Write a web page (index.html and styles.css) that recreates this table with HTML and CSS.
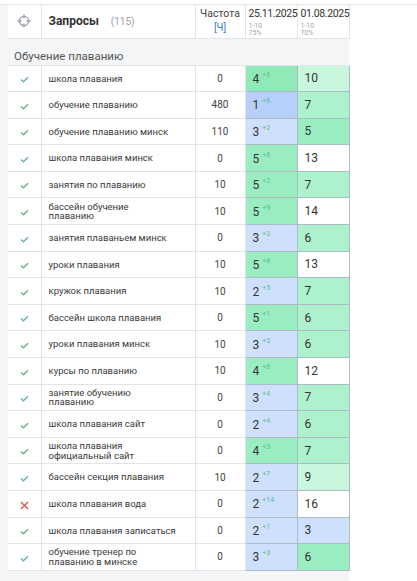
FILE: index.html
```html
<!DOCTYPE html>
<html lang="ru">
<head>
    <meta charset="UTF-8">
    <meta name="viewport" content="width=device-width, initial-scale=1.0">
    <title>Запросы</title>
    <link rel="stylesheet" href="styles.css">
</head>
<body>
    <div class="top-gap"></div>
    <div class="panel">
        <table class="queries">
            <colgroup>
                <col class="col-icon">
                <col class="col-query">
                <col class="col-freq">
                <col class="col-date">
                <col class="col-date">
            </colgroup>
            <thead>
                <tr class="head-row">
                    <th class="icon-cell">
                        <svg width="14" height="14" viewBox="0 0 14 14" class="target">
                            <circle cx="7" cy="7" r="4.6" fill="none" stroke="#9aa0a6" stroke-width="1.3"/>
                            <path d="M7 0.5V4.5M7 9.5V13.5M0.5 7H4.5M9.5 7H13.5" stroke="#9aa0a6" stroke-width="1.3"/>
                        </svg>
                    </th>
                    <th class="query-head">Запросы <span class="count">(115)</span></th>
                    <th class="freq-head">Частота<br><span class="freq-unit">[Ч]</span></th>
                    <th class="date-head">25.11.2025<span class="range">1-10</span><span class="range">75%</span></th>
                    <th class="date-head">01.08.2025<span class="range">1-10</span><span class="range">70%</span></th>
                </tr>
            </thead>
            <tbody>
                <tr class="group-row">
                    <td colspan="5">Обучение плаванию</td>
                </tr>
                <tr>
                    <td class="icon-cell"><svg class="ok" width="9" height="7" viewBox="0 0 9 7"><path d="M1 3.6L3.4 5.8L8 1.2" fill="none" stroke="#5fb882" stroke-width="1.3"/></svg></td>
                    <td class="query"><span>школа плавания</span></td>
                    <td class="freq">0</td>
                    <td class="pos g4">4<sup>+6</sup></td>
                    <td class="pos g1">10</td>
                </tr>
                <tr>
                    <td class="icon-cell"><svg class="ok" width="9" height="7" viewBox="0 0 9 7"><path d="M1 3.6L3.4 5.8L8 1.2" fill="none" stroke="#5fb882" stroke-width="1.3"/></svg></td>
                    <td class="query"><span>обучение плаванию</span></td>
                    <td class="freq">480</td>
                    <td class="pos b2">1<sup>+6</sup></td>
                    <td class="pos g2">7</td>
                </tr>
                <tr>
                    <td class="icon-cell"><svg class="ok" width="9" height="7" viewBox="0 0 9 7"><path d="M1 3.6L3.4 5.8L8 1.2" fill="none" stroke="#5fb882" stroke-width="1.3"/></svg></td>
                    <td class="query"><span>обучение плаванию минск</span></td>
                    <td class="freq">110</td>
                    <td class="pos b1">3<sup>+2</sup></td>
                    <td class="pos g3">5</td>
                </tr>
                <tr>
                    <td class="icon-cell"><svg class="ok" width="9" height="7" viewBox="0 0 9 7"><path d="M1 3.6L3.4 5.8L8 1.2" fill="none" stroke="#5fb882" stroke-width="1.3"/></svg></td>
                    <td class="query"><span>школа плавания минск</span></td>
                    <td class="freq">0</td>
                    <td class="pos g3">5<sup>+8</sup></td>
                    <td class="pos">13</td>
                </tr>
                <tr>
                    <td class="icon-cell"><svg class="ok" width="9" height="7" viewBox="0 0 9 7"><path d="M1 3.6L3.4 5.8L8 1.2" fill="none" stroke="#5fb882" stroke-width="1.3"/></svg></td>
                    <td class="query"><span>занятия по плаванию</span></td>
                    <td class="freq">10</td>
                    <td class="pos g3">5<sup>+2</sup></td>
                    <td class="pos g2">7</td>
                </tr>
                <tr>
                    <td class="icon-cell"><svg class="ok" width="9" height="7" viewBox="0 0 9 7"><path d="M1 3.6L3.4 5.8L8 1.2" fill="none" stroke="#5fb882" stroke-width="1.3"/></svg></td>
                    <td class="query"><span>бассейн обучение плаванию</span></td>
                    <td class="freq">10</td>
                    <td class="pos g3">5<sup>+9</sup></td>
                    <td class="pos">14</td>
                </tr>
                <tr>
                    <td class="icon-cell"><svg class="ok" width="9" height="7" viewBox="0 0 9 7"><path d="M1 3.6L3.4 5.8L8 1.2" fill="none" stroke="#5fb882" stroke-width="1.3"/></svg></td>
                    <td class="query"><span>занятия плаваньем минск</span></td>
                    <td class="freq">0</td>
                    <td class="pos b1">3<sup>+3</sup></td>
                    <td class="pos g2">6</td>
                </tr>
                <tr>
                    <td class="icon-cell"><svg class="ok" width="9" height="7" viewBox="0 0 9 7"><path d="M1 3.6L3.4 5.8L8 1.2" fill="none" stroke="#5fb882" stroke-width="1.3"/></svg></td>
                    <td class="query"><span>уроки плавания</span></td>
                    <td class="freq">10</td>
                    <td class="pos g3">5<sup>+8</sup></td>
                    <td class="pos">13</td>
                </tr>
                <tr>
                    <td class="icon-cell"><svg class="ok" width="9" height="7" viewBox="0 0 9 7"><path d="M1 3.6L3.4 5.8L8 1.2" fill="none" stroke="#5fb882" stroke-width="1.3"/></svg></td>
                    <td class="query"><span>кружок плавания</span></td>
                    <td class="freq">10</td>
                    <td class="pos b1">2<sup>+5</sup></td>
                    <td class="pos g2">7</td>
                </tr>
                <tr>
                    <td class="icon-cell"><svg class="ok" width="9" height="7" viewBox="0 0 9 7"><path d="M1 3.6L3.4 5.8L8 1.2" fill="none" stroke="#5fb882" stroke-width="1.3"/></svg></td>
                    <td class="query"><span>бассейн школа плавания</span></td>
                    <td class="freq">0</td>
                    <td class="pos g3">5<sup>+1</sup></td>
                    <td class="pos g2">6</td>
                </tr>
                <tr>
                    <td class="icon-cell"><svg class="ok" width="9" height="7" viewBox="0 0 9 7"><path d="M1 3.6L3.4 5.8L8 1.2" fill="none" stroke="#5fb882" stroke-width="1.3"/></svg></td>
                    <td class="query"><span>уроки плавания минск</span></td>
                    <td class="freq">10</td>
                    <td class="pos b1">3<sup>+3</sup></td>
                    <td class="pos g2">6</td>
                </tr>
                <tr>
                    <td class="icon-cell"><svg class="ok" width="9" height="7" viewBox="0 0 9 7"><path d="M1 3.6L3.4 5.8L8 1.2" fill="none" stroke="#5fb882" stroke-width="1.3"/></svg></td>
                    <td class="query"><span>курсы по плаванию</span></td>
                    <td class="freq">10</td>
                    <td class="pos g3">4<sup>+8</sup></td>
                    <td class="pos">12</td>
                </tr>
                <tr>
                    <td class="icon-cell"><svg class="ok" width="9" height="7" viewBox="0 0 9 7"><path d="M1 3.6L3.4 5.8L8 1.2" fill="none" stroke="#5fb882" stroke-width="1.3"/></svg></td>
                    <td class="query"><span>занятие обучению плаванию</span></td>
                    <td class="freq">0</td>
                    <td class="pos b1">3<sup>+4</sup></td>
                    <td class="pos g2">7</td>
                </tr>
                <tr>
                    <td class="icon-cell"><svg class="ok" width="9" height="7" viewBox="0 0 9 7"><path d="M1 3.6L3.4 5.8L8 1.2" fill="none" stroke="#5fb882" stroke-width="1.3"/></svg></td>
                    <td class="query"><span>школа плавания сайт</span></td>
                    <td class="freq">0</td>
                    <td class="pos b1">2<sup>+4</sup></td>
                    <td class="pos g2">6</td>
                </tr>
                <tr>
                    <td class="icon-cell"><svg class="ok" width="9" height="7" viewBox="0 0 9 7"><path d="M1 3.6L3.4 5.8L8 1.2" fill="none" stroke="#5fb882" stroke-width="1.3"/></svg></td>
                    <td class="query"><span>школа плавания официальный сайт</span></td>
                    <td class="freq">0</td>
                    <td class="pos g3">4<sup>+3</sup></td>
                    <td class="pos g2">7</td>
                </tr>
                <tr>
                    <td class="icon-cell"><svg class="ok" width="9" height="7" viewBox="0 0 9 7"><path d="M1 3.6L3.4 5.8L8 1.2" fill="none" stroke="#5fb882" stroke-width="1.3"/></svg></td>
                    <td class="query"><span>бассейн секция плавания</span></td>
                    <td class="freq">10</td>
                    <td class="pos b1">2<sup>+7</sup></td>
                    <td class="pos g1">9</td>
                </tr>
                <tr>
                    <td class="icon-cell"><svg class="fail" width="9" height="9" viewBox="0 0 9 9"><path d="M1 1L8 8M8 1L1 8" fill="none" stroke="#e05252" stroke-width="1.4"/></svg></td>
                    <td class="query"><span>школа плавания вода</span></td>
                    <td class="freq">0</td>
                    <td class="pos b1">2<sup>+14</sup></td>
                    <td class="pos">16</td>
                </tr>
                <tr>
                    <td class="icon-cell"><svg class="ok" width="9" height="7" viewBox="0 0 9 7"><path d="M1 3.6L3.4 5.8L8 1.2" fill="none" stroke="#5fb882" stroke-width="1.3"/></svg></td>
                    <td class="query"><span>школа плавания записаться</span></td>
                    <td class="freq">0</td>
                    <td class="pos b1">2<sup>+1</sup></td>
                    <td class="pos b1">3</td>
                </tr>
                <tr>
                    <td class="icon-cell"><svg class="ok" width="9" height="7" viewBox="0 0 9 7"><path d="M1 3.6L3.4 5.8L8 1.2" fill="none" stroke="#5fb882" stroke-width="1.3"/></svg></td>
                    <td class="query"><span>обучение тренер по плаванию в минске</span></td>
                    <td class="freq">0</td>
                    <td class="pos b1">3<sup>+3</sup></td>
                    <td class="pos g3">6</td>
                </tr>
            </tbody>
        </table>
    </div>
</body>
</html>
```

FILE: styles.css
```css
body {
    margin: 0;
    padding: 0;
    background: #ffffff;
    font-family: 'Roboto', 'Open Sans', sans-serif;
    color: #333;
}

.top-gap {
    height: 4px;
    border-bottom: 1px solid #e3e6ea;
}

.panel {
    width: 341px;
    padding: 0 0 10px 8px;
    background: #f3f5f7;
}

.queries {
    width: 341px;
    border-collapse: collapse;
    table-layout: fixed;
}

.col-icon { width: 33px; }
.col-query { width: 154px; }
.col-freq { width: 50px; }
.col-date { width: 52px; }

.queries td,
.queries th {
    padding: 0;
    border: 1px solid #e1e4e8;
    background: #ffffff;
    font-weight: normal;
}

.queries tr:first-child th {
    border-top: none;
}

.queries tr > :first-child {
    border-left: none;
}

.head-row {
    height: 33px;
}

.head-row th {
    vertical-align: top;
}

.head-row .icon-cell {
    vertical-align: middle;
    text-align: center;
}

.target {
    display: block;
    margin: 0 auto;
}

.query-head {
    vertical-align: middle !important;
    text-align: left;
    padding-left: 7px !important;
    font-size: 12px;
    font-weight: 700 !important;
    color: #333;
}

.count {
    font-weight: normal;
    font-size: 10px;
    color: #9aa0a6;
    margin-left: 9px;
}

.freq-head {
    text-align: center;
    font-size: 10.5px;
    line-height: 14px;
    padding-top: 2px !important;
    color: #444;
}

.freq-unit {
    color: #3b7dc4;
    font-size: 10px;
}

.date-head {
    text-align: left;
    padding: 2px 0 0 3px !important;
    font-size: 10.5px;
    letter-spacing: -0.4px;
    line-height: 14px;
    color: #333;
    white-space: nowrap;
}

.range {
    display: block;
    font-size: 7px;
    letter-spacing: 0;
    line-height: 7px;
    color: #a3a8ae;
}

.range:first-of-type {
    margin-top: 2px;
}

.group-row {
    height: 27px;
}

.group-row td {
    background: #f3f5f7;
    border-left: none;
    border-right: none;
    padding: 9px 0 0 6px;
    font-size: 11.5px;
    color: #555;
    vertical-align: middle;
}

tbody tr {
    height: 26.6px;
}

.icon-cell {
    text-align: center;
}

.ok,
.fail {
    display: inline-block;
    vertical-align: middle;
}

.query {
    padding-left: 7px !important;
    font-size: 9.5px;
    line-height: 9.5px;
    color: #3a3a3a;
}

.query span {
    display: block;
    max-width: 127.5px;
}

.freq {
    text-align: center;
    font-size: 10px;
    color: #444;
}

.pos {
    padding-left: 7px !important;
    font-size: 12px;
    color: #333;
    border-color: #a9bcc8 !important;
}

.pos sup {
    font-size: 7px;
    color: #5cbf88;
    margin-left: 3px;
    vertical-align: 6px;
}

.g4 { background: #8feab8 !important; }
.g3 { background: #9aedc1 !important; }
.g2 { background: #aef2cd !important; }
.g1 { background: #c9f7de !important; }
.b2 { background: #b6d0fa !important; }
.b1 { background: #cfe0fc !important; }
```
